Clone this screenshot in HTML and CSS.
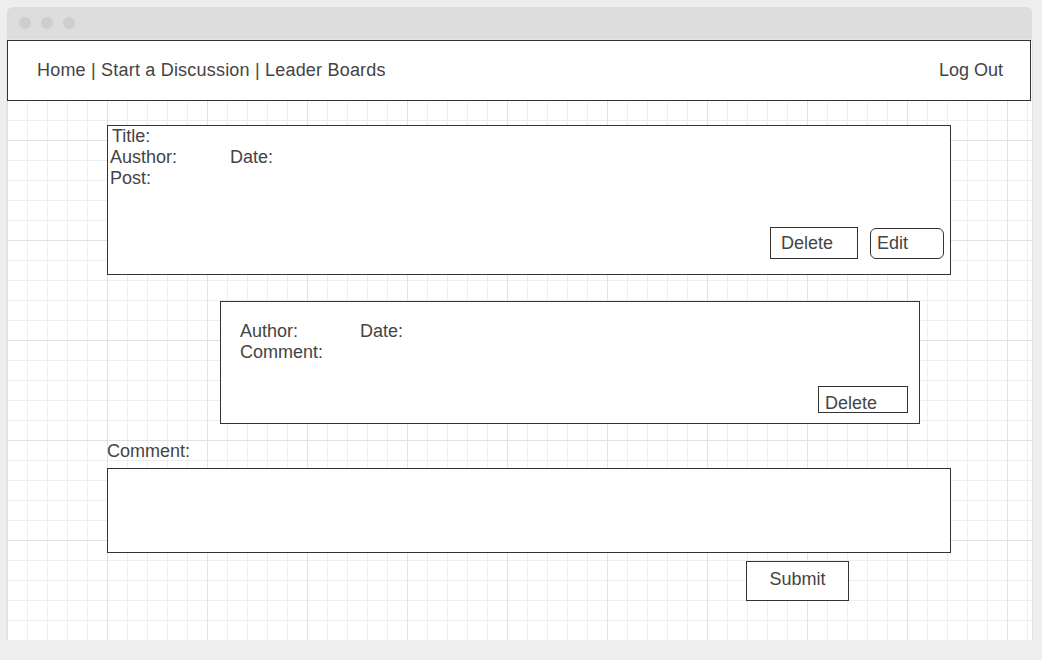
FILE: index.html
```html
<!DOCTYPE html>
<html lang="en">
<head>
<meta charset="utf-8">
<title>Discussion</title>
<link rel="stylesheet" href="styles.css">
</head>
<body>
<div class="window">
  <div class="titlebar">
    <span class="dot"></span><span class="dot"></span><span class="dot"></span>
  </div>
  <div class="canvas">
    <div class="header">
      <div class="nav">Home | Start a Discussion | Leader Boards</div>
      <div class="logout">Log Out</div>
    </div>

    <div class="post">
      <div class="line title">Title:</div>
      <div class="line pair"><span class="key">Austhor:</span><span>Date:</span></div>
      <div class="line">Post:</div>
      <div class="actions">
        <div class="btn btn-delete">Delete</div>
        <div class="btn btn-edit">Edit</div>
      </div>
    </div>

    <div class="comment">
      <div class="line pair"><span class="key">Author:</span><span>Date:</span></div>
      <div class="line">Comment:</div>
      <div class="btn btn-delete-small">Delete</div>
    </div>

    <div class="label">Comment:</div>
    <div class="textbox"></div>
    <div class="btn btn-submit">Submit</div>
  </div>
</div>
</body>
</html>
```

FILE: styles.css
```css
html, body {
  margin: 0;
  padding: 0;
}

body {
  background: #eeeeee;
  font-family: "Liberation Sans", Arial, sans-serif;
  font-size: 18px;
  line-height: 21px;
  color: #444444;
}

.window {
  margin: 7px 0 0 7px;
  width: 1025px;
}

.titlebar {
  height: 33px;
  box-sizing: border-box;
  background: #dddddd;
  border-radius: 6px 6px 0 0;
  display: flex;
  gap: 10px;
  padding: 10px 0 0 12px;
}

.dot {
  width: 12px;
  height: 12px;
  border-radius: 50%;
  background: #cecece;
}

.canvas {
  height: 600px;
  display: flow-root;
  background-color: #ffffff;
  background-image:
    linear-gradient(to right, #e2e2e2 1px, transparent 1px),
    linear-gradient(to bottom, #e2e2e2 1px, transparent 1px),
    linear-gradient(to right, #eeeeee 1px, transparent 1px),
    linear-gradient(to bottom, #eeeeee 1px, transparent 1px);
  background-size: 100px 100px, 100px 100px, 20px 20px, 20px 20px;
  box-shadow: 0 0 0 1px #e4e4e4;
}

.header {
  width: 1024px;
  height: 61px;
  box-sizing: border-box;
  border: 1px solid #333333;
  background: #ffffff;
  display: flex;
  justify-content: space-between;
  padding: 19px 27px 0 29px;
}

.nav {
  letter-spacing: 0.2px;
}

.post {
  margin: 24px 0 0 100px;
  width: 844px;
  height: 150px;
  box-sizing: border-box;
  border: 1px solid #333333;
  background: #ffffff;
  display: flex;
  flex-direction: column;
  padding: 0 6px 15px 2px;
}

.title {
  padding-left: 2px;
}

.pair {
  display: flex;
}

.key {
  width: 120px;
}

.actions {
  margin-top: auto;
  display: flex;
  justify-content: flex-end;
  align-items: flex-end;
  gap: 12px;
}

.btn {
  box-sizing: border-box;
  border: 1px solid #333333;
  background: #ffffff;
  display: flex;
  align-items: center;
}

.btn-delete {
  width: 88px;
  height: 32px;
  padding-left: 10px;
}

.btn-edit {
  width: 74px;
  height: 31px;
  padding-left: 6px;
  border-radius: 6px;
}

.comment {
  margin: 26px 0 0 213px;
  width: 700px;
  height: 123px;
  box-sizing: border-box;
  border: 1px solid #333333;
  background: #ffffff;
  display: flex;
  flex-direction: column;
  padding: 19px 11px 10px 19px;
}

.btn-delete-small {
  margin-top: auto;
  align-self: flex-end;
  width: 90px;
  height: 27px;
  padding: 6px 0 0 6px;
  align-items: flex-start;
  overflow: hidden;
}

.label {
  margin: 17px 0 0 100px;
}

.textbox {
  margin: 6px 0 0 100px;
  width: 844px;
  height: 85px;
  box-sizing: border-box;
  border: 1px solid #333333;
  background: #ffffff;
}

.btn-submit {
  margin: 8px 0 0 739px;
  width: 103px;
  height: 40px;
  justify-content: center;
  padding-bottom: 3px;
}
```
